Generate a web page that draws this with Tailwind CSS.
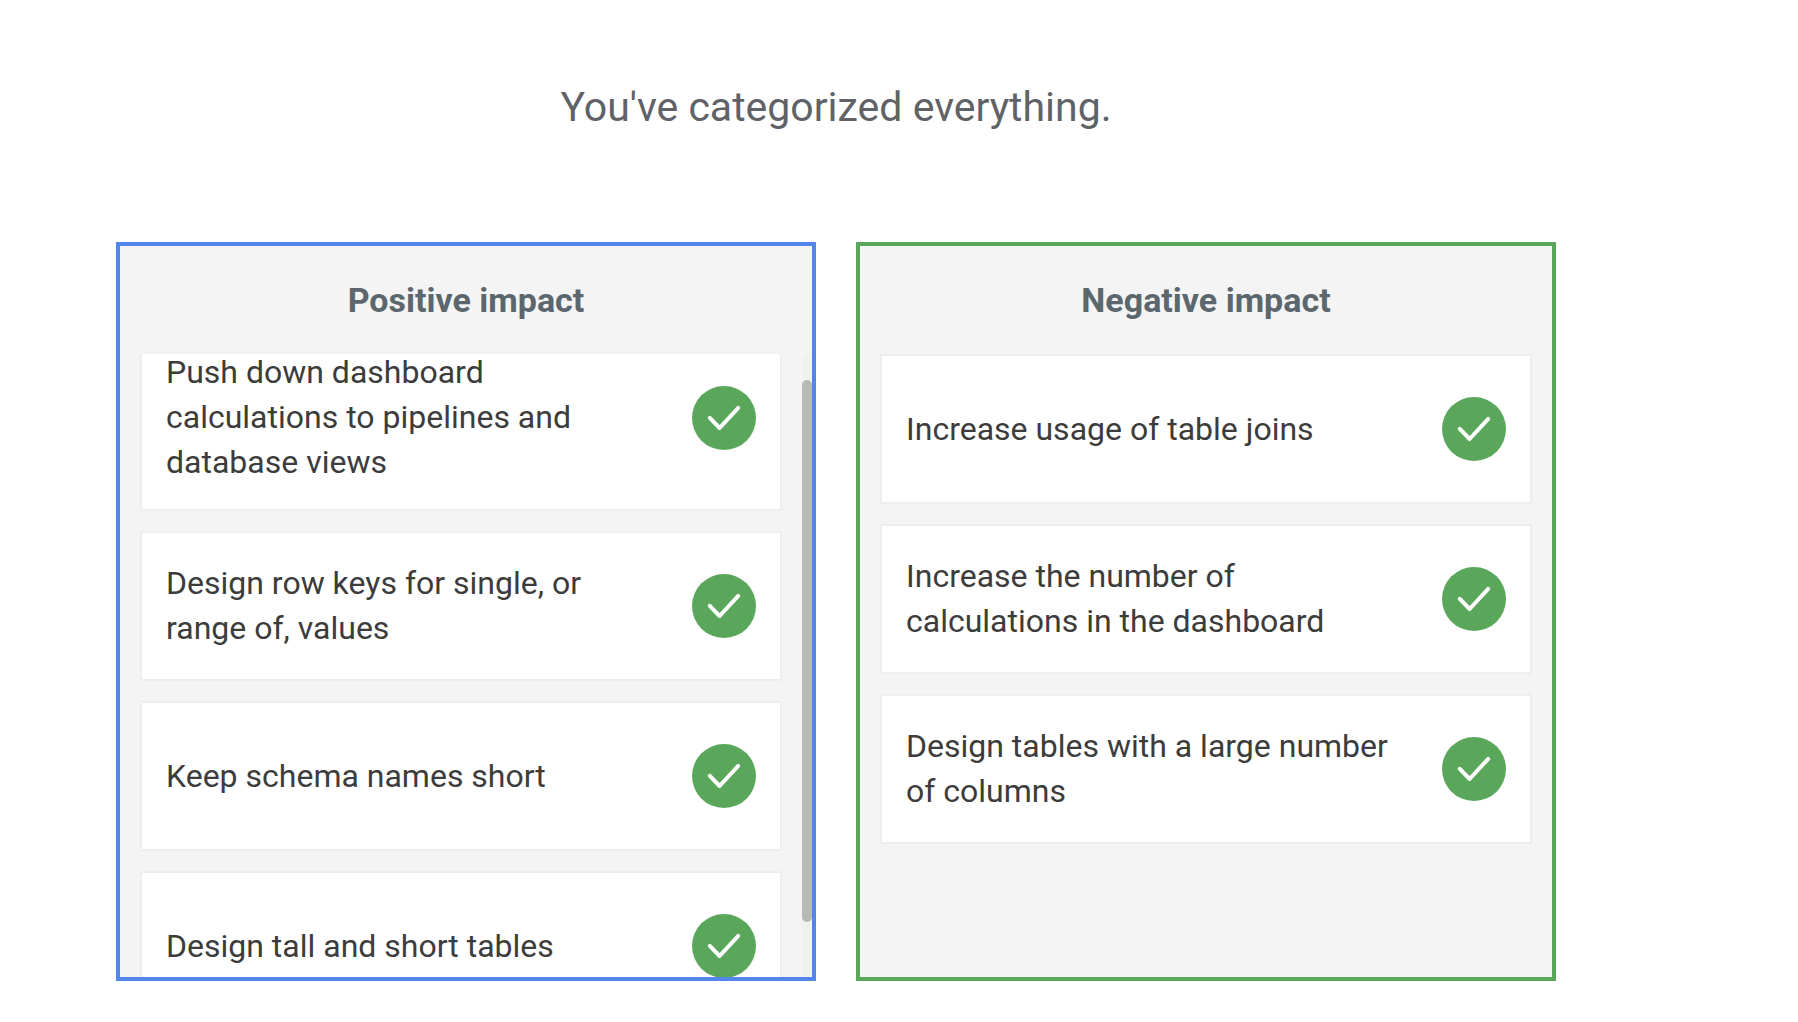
<!DOCTYPE html>
<html lang="en">
<head>
<meta charset="utf-8">
<meta name="viewport" content="width=device-width, initial-scale=1">
<title>Categorize</title>
<script src="https://cdn.jsdelivr.net/npm/@tailwindcss/browser@4"></script>
</head>
<body class="bg-white font-['Roboto',sans-serif] text-[32px] leading-[45px] text-[#3c3c3c]">
<svg class="hidden" aria-hidden="true">
  <symbol id="check" viewBox="0 0 64 64">
    <circle cx="32" cy="32" r="32" fill="#5aa75c"/>
    <path d="M17.8 31.8 27.6 42 46.2 21.9" fill="none" stroke="#fff" stroke-width="4" stroke-linecap="round" stroke-linejoin="round"/>
  </symbol>
</svg>
<main class="pt-[79px] pr-[242px] pb-10 pl-[116px]">
  <h1 class="text-center text-[41px] leading-[56px] text-[#5f6368]">You've categorized everything.</h1>

  <div class="mt-[107px] grid grid-cols-2 gap-10">
    <section class="relative border-4 border-[#5485ed] bg-[#f4f4f4]">
      <h2 class="flex h-27 items-center justify-center text-[34px] font-bold text-[#5b676d]">Positive impact</h2>
      <!-- the list is scrolled down by 30px -->
      <div class="h-[623px] overflow-hidden pr-[30px] pl-5">
        <ul class="-mt-[30px] flex flex-col gap-5">
          <li class="flex items-center justify-between gap-12 border-2 border-[#eee] bg-white px-6 py-6">
            <span>Push down dashboard calculations to pipelines and database views</span>
            <svg class="size-16 shrink-0" role="img" aria-label="Correct"><use href="#check"/></svg>
          </li>
          <li class="flex min-h-[150px] items-center justify-between gap-12 border-2 border-[#eee] bg-white px-6 py-6">
            <span>Design row keys for single, or range of, values</span>
            <svg class="size-16 shrink-0" role="img" aria-label="Correct"><use href="#check"/></svg>
          </li>
          <li class="flex min-h-[150px] items-center justify-between gap-12 border-2 border-[#eee] bg-white px-6 py-6">
            <span>Keep schema names short</span>
            <svg class="size-16 shrink-0" role="img" aria-label="Correct"><use href="#check"/></svg>
          </li>
          <li class="flex min-h-[150px] items-center justify-between gap-12 border-2 border-[#eee] bg-white px-6 py-6">
            <span>Design tall and short tables</span>
            <svg class="size-16 shrink-0" role="img" aria-label="Correct"><use href="#check"/></svg>
          </li>
        </ul>
      </div>
      <!-- scroll track and thumb over the list's right edge -->
      <div class="absolute right-0 bottom-0 h-[623px] w-[10px] rounded-full bg-[#f1f1f1] pt-[26px]" aria-hidden="true">
        <div class="h-[542px] rounded-full bg-[#b8b8b8]"></div>
      </div>
    </section>

    <section class="border-4 border-[#5aa75c] bg-[#f4f4f4]">
      <h2 class="flex h-27 items-center justify-center text-[34px] font-bold text-[#5b676d]">Negative impact</h2>
      <ul class="flex flex-col gap-5 px-5">
        <li class="flex min-h-[150px] items-center justify-between gap-12 border-2 border-[#eee] bg-white px-6 py-6">
          <span>Increase usage of table joins</span>
          <svg class="size-16 shrink-0" role="img" aria-label="Correct"><use href="#check"/></svg>
        </li>
        <li class="flex min-h-[150px] items-center justify-between gap-12 border-2 border-[#eee] bg-white px-6 py-6">
          <span>Increase the number of calculations in the dashboard</span>
          <svg class="size-16 shrink-0" role="img" aria-label="Correct"><use href="#check"/></svg>
        </li>
        <li class="flex min-h-[150px] items-center justify-between gap-12 border-2 border-[#eee] bg-white px-6 py-6">
          <span>Design tables with a large number of columns</span>
          <svg class="size-16 shrink-0" role="img" aria-label="Correct"><use href="#check"/></svg>
        </li>
      </ul>
    </section>
  </div>
</main>
</body>
</html>
